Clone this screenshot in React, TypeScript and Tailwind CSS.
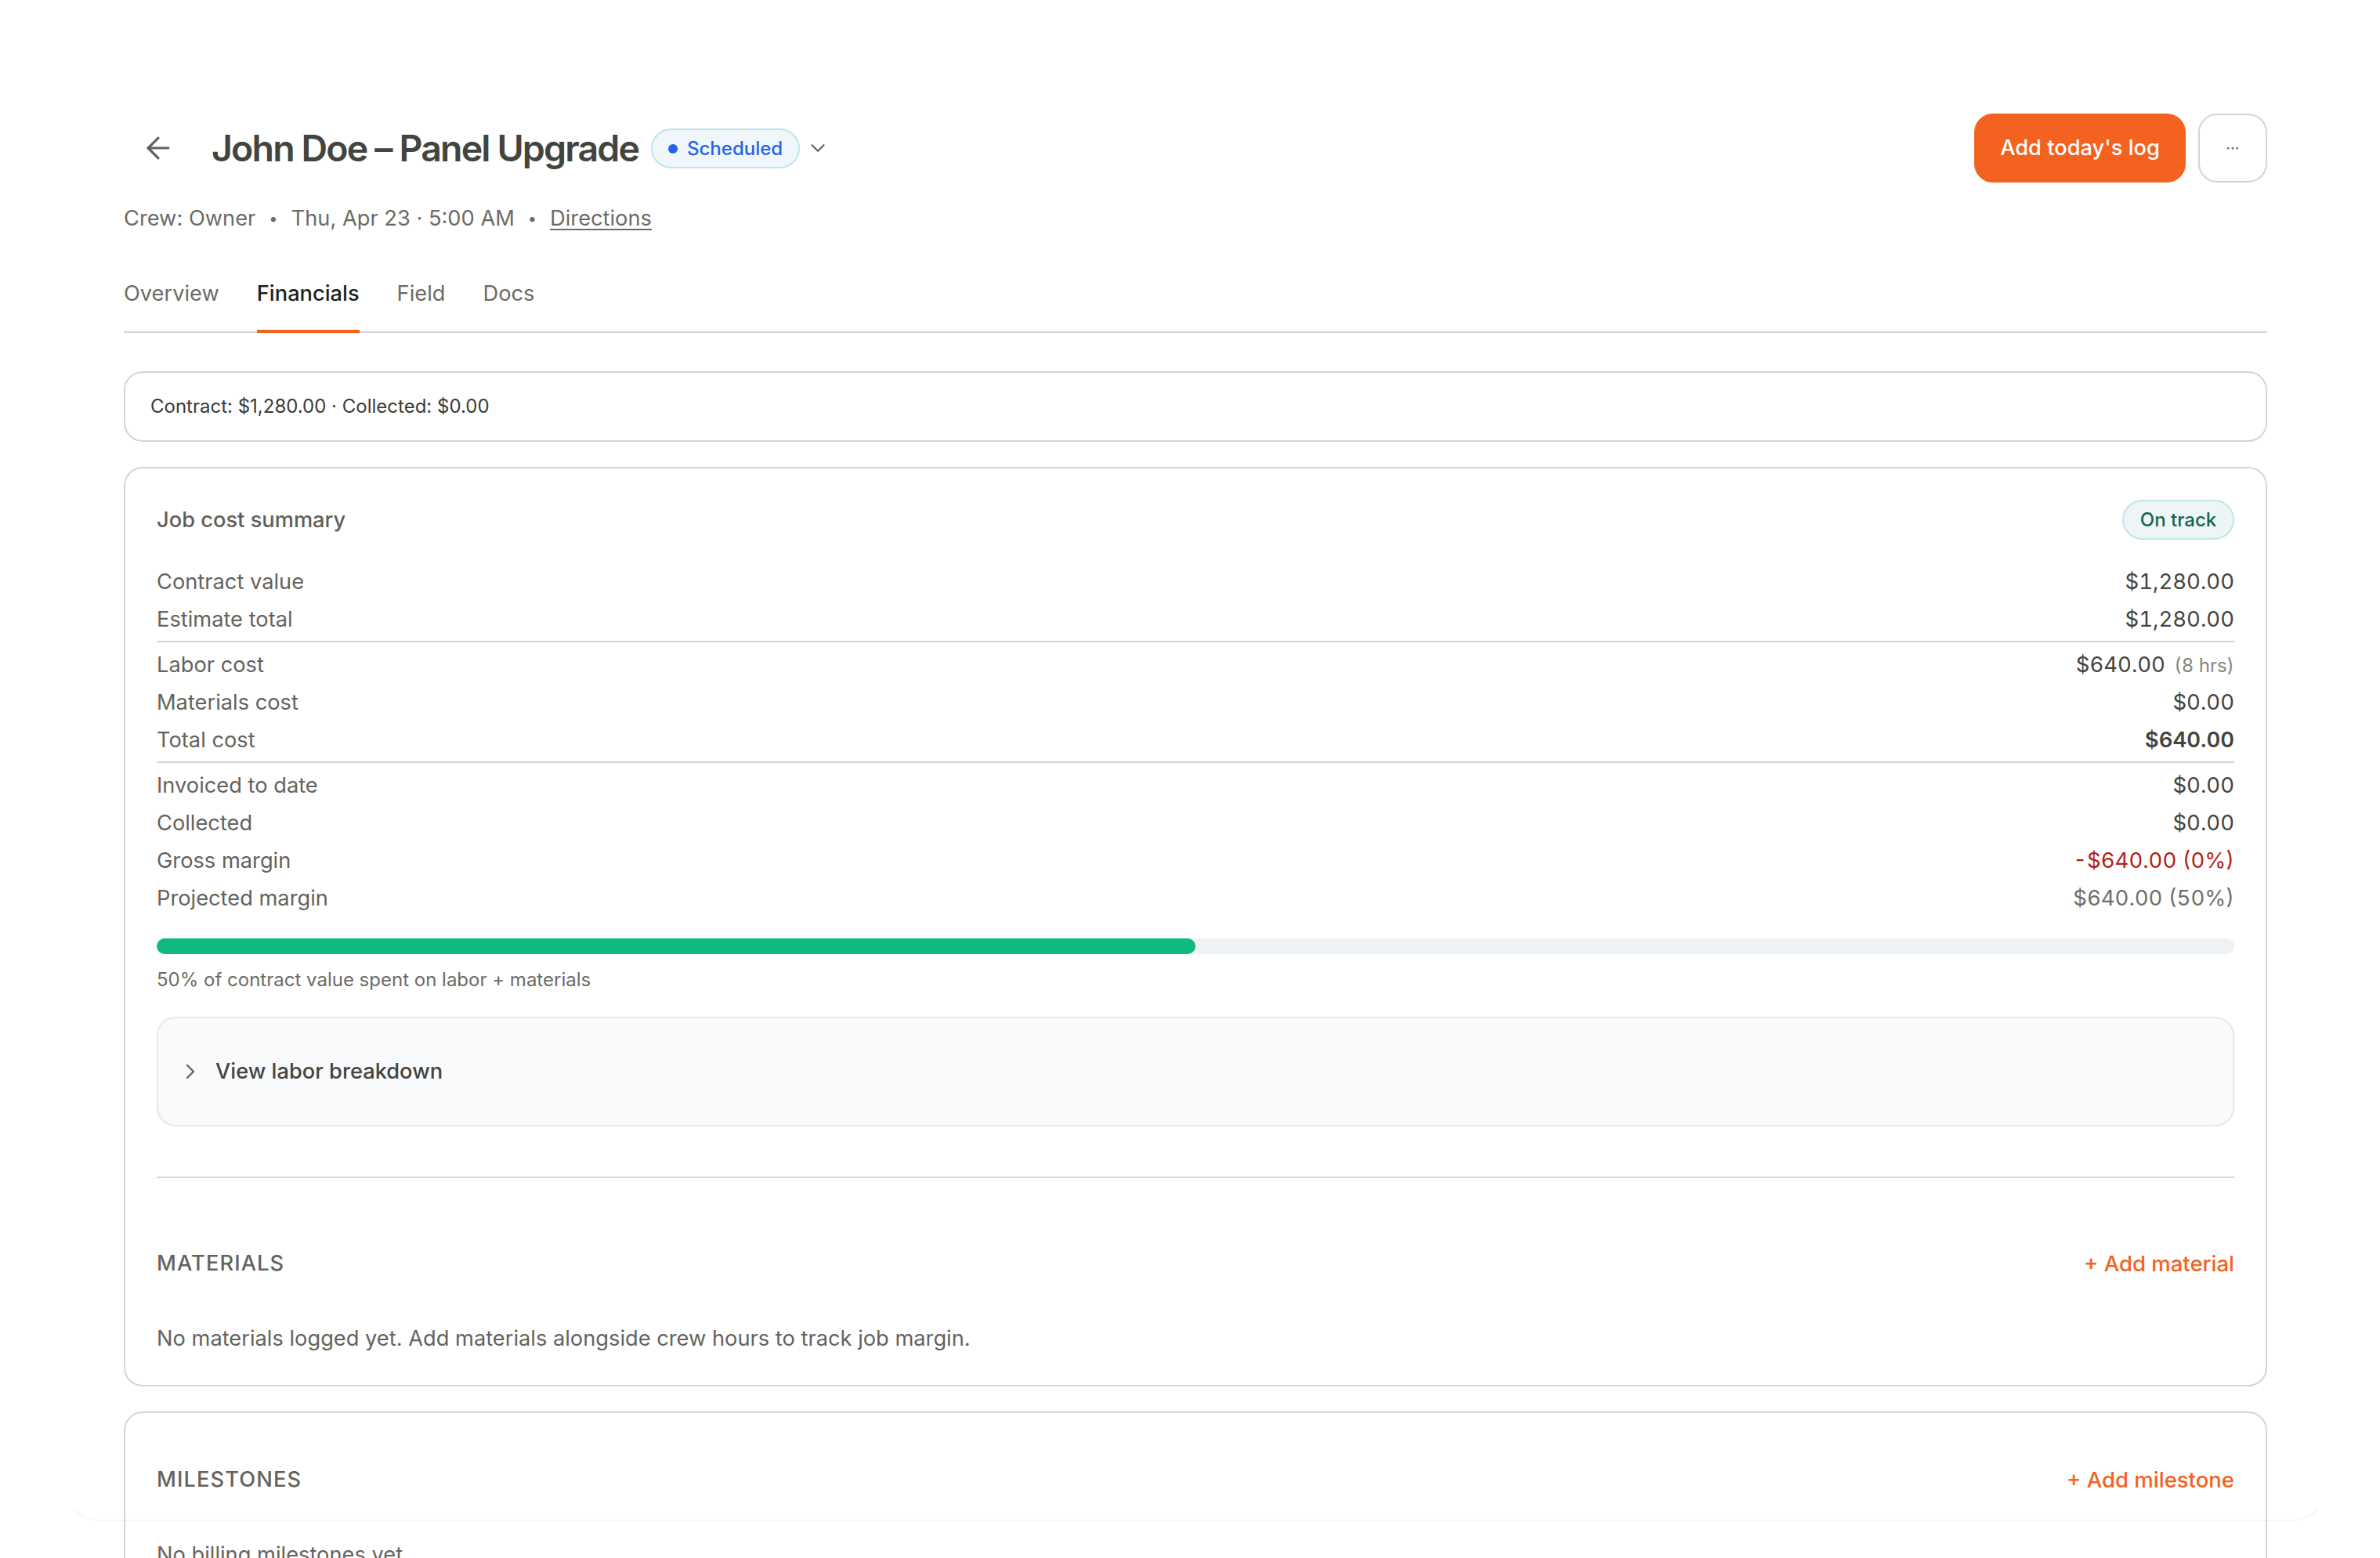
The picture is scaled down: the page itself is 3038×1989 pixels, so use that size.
import { ArrowLeft, ChevronDown, ChevronRight } from 'lucide-react';

function Row({ label, children }: { label: string; children: React.ReactNode }) {
  return (
    <div className="flex h-12 items-baseline justify-between pt-1">
      <span className="text-[#63635d]">{label}</span>
      <span className="text-[27.5px] tabular-nums">{children}</span>
    </div>
  );
}

export default function App() {
  return (
    <div className="h-[1989px] overflow-hidden bg-white font-['Inter',sans-serif] text-[27.25px] text-[#44443f]">
      <div className="ml-[79px] mt-[79px] h-[1863px] w-[2894px] rounded-[48px] border-2 border-transparent border-b-[#f6f6f6] px-[77px] pt-[64px]">
        <div className="flex items-center justify-between">
          <div className="flex items-center">
            <button className="-mr-[2px] flex h-[88px] w-[88px] items-center justify-center text-[#63635d]">
              <ArrowLeft size={44} strokeWidth={1.75} />
            </button>
            <h1 className="ml-[26px] pt-[2px] text-[46.5px] font-semibold tracking-[-0.04em] text-[#44443f]">John Doe – Panel Upgrade</h1>
            <span className="ml-4 flex h-[51px] items-center gap-3 rounded-full border-2 border-[#bde6ec] bg-[#f0f7fa] px-5 pt-[1px] text-[24px] font-medium text-[#2563eb]">
              <span className="h-3 w-3 rounded-full bg-[#2563eb]" />
              Scheduled
            </span>
            <ChevronDown size={30} strokeWidth={1.75} className="ml-2 text-[#63635d]" />
          </div>
          <div className="flex items-center gap-4">
            <button className="h-[88px] w-[270px] rounded-[24px] bg-[#f4621f] pt-[1px] font-medium text-white">Add today's log</button>
            <button className="h-[88px] w-[88px] rounded-[24px] border-2 border-[#d1d5db] text-[20px] text-[#63635d]">···</button>
          </div>
        </div>

        <div className="mt-[26px] flex items-center text-[#6b6b65]">
          <span>Crew: Owner</span>
          <span className="mx-[17px] text-[20px]">•</span>
          <span>Thu, Apr 23 · 5:00 AM</span>
          <span className="mx-[17px] text-[20px]">•</span>
          <span className="underline underline-offset-4">Directions</span>
        </div>

        <div className="mt-[38px] flex h-[87px] gap-12 border-b-2 border-[#d1d5db]">
          <span className="pt-[17px] text-[#6b6b65]">Overview</span>
          <span className="h-[87px] border-b-4 border-[#f4621f] pt-[17px] font-medium text-[#1f1f1c]">Financials</span>
          <span className="pt-[17px] text-[#6b6b65]">Field</span>
          <span className="pt-[17px] text-[#6b6b65]">Docs</span>
        </div>

        <div className="mt-[49px] flex h-[90px] items-center rounded-[24px] border-2 border-[#d1d5db] px-8 text-[24px] text-[#3a3a36]">
          Contract: $1,280.00 · Collected: $0.00
        </div>

        <div className="mt-8 h-[1174px] rounded-[24px] border-2 border-[#d1d5db] px-10 pt-10">
          <div className="flex h-[51px] items-center justify-between">
            <span className="pt-[2px] font-medium text-[#5f5f59]">Job cost summary</span>
            <span className="flex h-[51px] w-[143px] items-center justify-center rounded-full border-2 border-[#bde6ec] bg-[#eef5f7] pt-[2px] text-[24px] font-medium text-[#14664f]">On track</span>
          </div>

          <div className="mt-[29px]">
            <Row label="Contract value">$1,280.00</Row>
            <Row label="Estimate total">$1,280.00</Row>
            <div className="my-1 border-t-2 border-[#d1d5db]" />
            <Row label="Labor cost">
              $640.00 <span className="ml-1 text-[24px] text-[#85857f]">(8 hrs)</span>
            </Row>
            <Row label="Materials cost">$0.00</Row>
            <Row label="Total cost"><span className="font-semibold">$640.00</span></Row>
            <div className="my-1 border-t-2 border-[#d1d5db]" />
            <Row label="Invoiced to date">$0.00</Row>
            <Row label="Collected">$0.00</Row>
            <Row label="Gross margin"><span className="text-[#b81d18]">-$640.00 (0%)</span></Row>
            <Row label="Projected margin"><span className="text-[#6f6f69]">$640.00 (50%)</span></Row>
          </div>

          <div className="mt-[28px] h-5 rounded-full bg-[#eef2f5]">
            <div className="h-5 w-1/2 rounded-full bg-[#10b981]" />
          </div>
          <p className="mt-[15px] text-[24px] text-[#6b6b65]">50% of contract value spent on labor + materials</p>

          <div className="mt-[29px] flex h-[140px] items-center rounded-[24px] border-2 border-[#e5e7eb] bg-[#f8fafc] px-[25px]">
            <ChevronRight size={32} strokeWidth={1.75} className="text-[#63635d]" />
            <span className="ml-4 pt-[2px] font-medium text-[#44443f]">View labor breakdown</span>
          </div>

          <div className="mt-16 border-t-2 border-[#d1d5db]" />

          <div className="mt-[89px] flex items-center justify-between">
            <span className="font-medium tracking-[0.04em] text-[#63635d]">MATERIALS</span>
            <span className="text-[27.5px] font-medium text-[#f4621f]">+ Add material</span>
          </div>
          <p className="mt-[55px] text-[#63635d]">No materials logged yet. Add materials alongside crew hours to track job margin.</p>
        </div>

        <div className="mt-8 rounded-[24px] border-2 border-[#d1d5db] px-10 pb-10 pt-[65px]">
          <div className="flex items-center justify-between">
            <span className="font-medium tracking-[0.04em] text-[#63635d]">MILESTONES</span>
            <span className="text-[27.5px] font-medium text-[#f4621f]">+ Add milestone</span>
          </div>
          <p className="mt-[55px] text-[#63635d]">No billing milestones yet.</p>
        </div>
      </div>
    </div>
  );
}
